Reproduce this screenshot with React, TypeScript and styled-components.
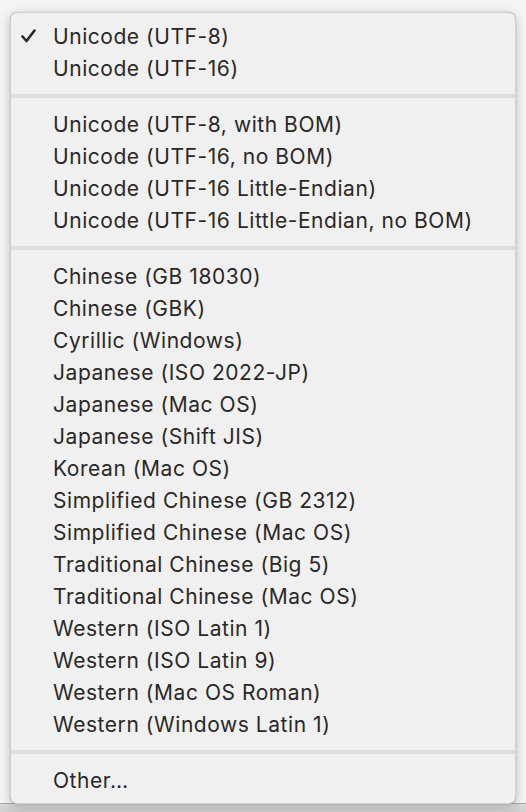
import React from "react";
import styled, { createGlobalStyle } from "styled-components";

const Global = createGlobalStyle`
  html, body { margin: 0; padding: 0; }
  body {
    background: #f5f5f5;
    font-family: Inter, "Noto Sans", "Liberation Sans", sans-serif;
    overflow: hidden;
  }
`;

const Page = styled.div`
  width: 526px;
  height: 812px;
  display: flex;
  flex-direction: column;
  overflow: hidden;
`;

const MenuArea = styled.div`
  padding: 12px 10px 0 10px;
  position: relative;
  z-index: 1;
`;

const Menu = styled.div`
  background: #f0f0f0;
  border: 1px solid rgba(0, 0, 0, 0.14);
  border-radius: 7px;
  box-shadow: 0 3px 12px rgba(0, 0, 0, 0.22), 0 0 1px rgba(0, 0, 0, 0.3);
  padding: 7px 0;
  display: flex;
  flex-direction: column;
`;

const Item = styled.div`
  height: 32px;
  display: flex;
  align-items: center;
  padding-left: 42px;
  position: relative;
  font-size: 21px;
  color: #2a2826;
  letter-spacing: 0.55px;
  white-space: nowrap;
`;

const Check = styled.svg`
  position: absolute;
  left: 10px;
  top: 9px;
  width: 15px;
  height: 14px;
`;

const Separator = styled.div`
  height: 24px;
  display: flex;
  align-items: center;
  &::after {
    content: "";
    display: block;
    width: 100%;
    height: 4px;
    background: #dedede;
  }
`;

const Bar = styled.div`
  flex: 1;
  margin-top: -1px;
  border-top: 1px solid #a9a9a9;
  background: linear-gradient(#dcdcdc, #cfcfcf);
`;

const groups: string[][] = [
  ["Unicode (UTF-8)", "Unicode (UTF-16)"],
  [
    "Unicode (UTF-8, with BOM)",
    "Unicode (UTF-16, no BOM)",
    "Unicode (UTF-16 Little-Endian)",
    "Unicode (UTF-16 Little-Endian, no BOM)",
  ],
  [
    "Chinese (GB 18030)",
    "Chinese (GBK)",
    "Cyrillic (Windows)",
    "Japanese (ISO 2022-JP)",
    "Japanese (Mac OS)",
    "Japanese (Shift JIS)",
    "Korean (Mac OS)",
    "Simplified Chinese (GB 2312)",
    "Simplified Chinese (Mac OS)",
    "Traditional Chinese (Big 5)",
    "Traditional Chinese (Mac OS)",
    "Western (ISO Latin 1)",
    "Western (ISO Latin 9)",
    "Western (Mac OS Roman)",
    "Western (Windows Latin 1)",
  ],
  ["Other…"],
];

export default function App() {
  return (
    <Page>
      <Global />
      <MenuArea>
        <Menu>
          {groups.map((g, gi) => (
            <React.Fragment key={gi}>
              {gi > 0 && <Separator />}
              {g.map((label) => (
                <Item key={label}>
                  {label === "Unicode (UTF-8)" && (
                    <Check viewBox="0 0 15 14">
                      <path
                        d="M1.5 7.5 L5.5 12 L13.5 1.5"
                        fill="none"
                        stroke="#2a2826"
                        strokeWidth="2.6"
                        strokeLinecap="round"
                        strokeLinejoin="round"
                      />
                    </Check>
                  )}
                  {label}
                </Item>
              ))}
            </React.Fragment>
          ))}
        </Menu>
      </MenuArea>
      <Bar />
    </Page>
  );
}
